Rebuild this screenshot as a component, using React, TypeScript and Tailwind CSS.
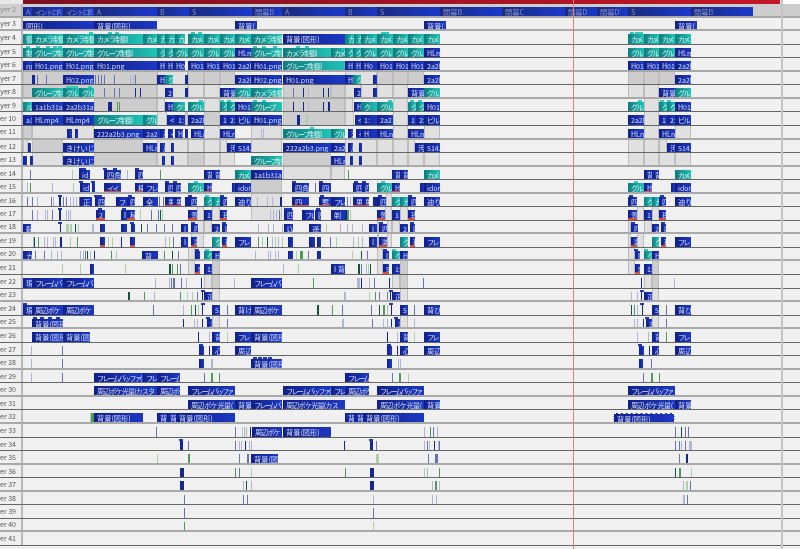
type Clip = [string, number, number, string?];

type Row = {
  n: number;
  bands?: string;
  clips?: Clip[];
  ticks?: string;
  marks?: string;
};

const clipStyles: Record<string, string> = {
  b: "bg-gradient-to-r from-[#11208a] to-[#1c38c4] text-[#d4ddf4]",
  r: "bg-gradient-to-r from-[#11208a] to-[#1c38c4] border-b-2 border-[#d8503c] text-[#d4ddf4]",
  t: "bg-gradient-to-r from-[#0f7c80] to-[#1fc4b6] text-[#d4eeee]",
  h: "bg-gradient-to-r from-[#1a2a7c] to-[#1b38cc] text-[#8490c4]",
  s: "bg-gradient-to-r from-[#11208a] to-[#1c38c4] border border-dashed border-white text-[#d4ddf4]",
};

const tickStyles: Record<string, string> = {
  l: "bg-[#6673b4]",
  L: "bg-[#aeb5d6]",
  b: "bg-[#16268f]",
  g: "bg-[#4f9a58]",
  G: "bg-[#a9d0aa]",
  d: "bg-[#10543c]",
};

const rows: Row[] = [
  { n: 2, clips: [["h",23,32,"A"],["h",32,63,"イントロA"],["h",63,94,"イントロB"],["h",94,157,"A"],["h",157,189,"B"],["h",189,252,"S"],["h",252,282,"閉幕B"],["h",282,345,"A"],["h",345,377,"B"],["h",377,440,"S"],["h",440,502,"閉幕B"],["h",502,565,"閉幕C"],["h",565,597,"閉幕D"],["h",597,628,"閉幕D'"],["h",628,691,"S"],["h",691,753,"閉幕B"]] },
  { n: 3, clips: [["b",23,94,"図形)"],["b",94,157,"背景(図形)"],["b",235,257,"背景("],["b",424,446,"背景("],["b",675,697,"背景("]] },
  { n: 4, marks: "t91 t110 t117 t193 t200 t383 t387 t632 t637 t641",
    clips: [["t",23,32,"御"],["t",32,63,"カメラ制御"],["t",63,94,"カメラ制御"],["t",94,143,"カメラ制御"],["t",143,157,"カメ"],["t",157,165,"カ"],["t",165,175,"カ"],["t",175,185,"カメ"],["t",188,204,"カメ"],["t",204,220,"カメ"],["t",220,235,"カメ"],["t",235,251,"カメ"],["t",251,282,"カメラ制御"],["b",283,345,"背景(図形)"],["t",345,354,"カ"],["t",354,361,"カ"],["t",361,377,"カメ"],["t",377,393,"カメ"],["t",393,408,"カメ"],["t",408,424,"カメ"],["t",424,440,"カメ"],["t",628,644,"カメ"],["t",644,659,"カメ"],["t",659,675,"カメ"],["t",675,691,"カメ"]] },
  { n: 5, marks: "t28 t38 t48 t55 t60 t255 t264 t275 t298 t307",
    clips: [["t",23,32,"制"],["t",32,63,"グループ制"],["t",63,94,"グループ制"],["t",94,157,"グループ制御"],["t",157,165,"グ"],["t",165,173,"ク"],["t",173,188,"グル"],["t",188,204,"グル"],["t",204,220,"グル"],["t",220,235,"グル"],["b",235,251,"HLm"],["t",251,282,"グループ制"],["t",283,331,"カメラ制御"],["t",331,345,"カメ"],["t",345,353,"ク"],["t",353,361,"ク"],["t",361,377,"グル"],["t",377,393,"グル"],["t",393,408,"グル"],["t",408,424,"グル"],["b",424,440,"HLm"],["t",628,644,"グル"],["t",644,659,"グル"],["t",659,675,"グル"],["b",675,691,"HLm"]] },
  { n: 6, clips: [["b",23,32,"ng"],["b",32,63,"H01.png"],["b",63,94,"H01.png"],["b",94,157,"H01.png"],["b",157,165,"H"],["b",165,173,"H"],["b",173,185,"H0"],["b",188,204,"H01"],["b",204,220,"H01"],["b",220,235,"H01"],["b",235,251,"2a2l"],["b",251,282,"H01.png"],["t",283,345,"グループ制御"],["b",345,353,"H"],["b",353,361,"H"],["b",361,377,"H0"],["b",377,393,"H01"],["b",393,408,"H01"],["b",408,424,"H01"],["b",424,440,"2a2l"],["b",628,644,"H01"],["b",644,659,"H01"],["b",659,675,"H01"],["b",675,691,"2a2l"]] },
  { n: 7, bands: "d23-157 e157-188 d188-204 d204-220 d220-235 e345-377 d377-393 d393-408 d408-424 d628-644 d644-659 d659-675",
    ticks: "b32+3 l37 l46 l95 l98 l101 l104 l114 L130 L133 l135 b185+3 L286 L289 L293 l303 L317 L320 L323",
    clips: [["b",63,94,"H02.png"],["b",157,165,"H"],["t",165,173,"ク"],["b",235,251,"2a2l"],["b",251,282,"H02.png"],["b",283,345,"H01.png"],["b",345,353,"H"],["t",353,361,"ク"],["b",373,377],["b",424,440,"2a2l"],["b",675,691,"2a2l"]] },
  { n: 8, bands: "d23-157 e157-188 e188-204 e204-220 d283-331 d331-345 e345-361 e361-377 e377-393 e393-408 e628-644 e644-659",
    marks: "t68 t72 t76 t90",
    ticks: "l104 l114 l119 b135 b140 b185+3 l293 b303 L308 b323 b328",
    clips: [["t",32,63,"グループ制"],["t",63,79,"グル"],["t",79,94,"グル"],["b",165,173,"2"],["b",220,235,"背景"],["t",235,251,"グル"],["t",251,282,"カメラ制御"],["b",354,361,"2"],["b",373,377],["b",408,424,"背景"],["t",424,440,"グル"],["b",659,675,"背景"],["t",675,691,"グル"]] },
  { n: 9, bands: "d94-157 e157-165 e204-220 d283-345 e345-353 e393-408 e644-659",
    marks: "t201 t222 t229 t255 t264 t390 t412 t420 t640 t662 t669",
    ticks: "b108+4 g117 g119 b293 b303 L308 b323 b328+2",
    clips: [["t",23,32,"ル"],["b",32,63,"1a1b31a"],["b",63,94,"2a2b31a"],["b",165,173,"H"],["t",173,185,"ク"],["t",188,204,"グル"],["t",220,227,"ク"],["t",227,235,"ク"],["b",235,251,"H01"],["t",251,282,"グループ"],["b",354,361,"H"],["t",361,377,"ク"],["t",377,393,"グル"],["t",408,416,"ク"],["t",416,424,"ク"],["b",424,440,"H01"],["t",628,644,"グル"],["t",659,667,"ク"],["t",667,675,"ク"],["b",675,691,"H01"]] },
  { n: 10, bands: "e157-167 d185-188 d204-220 d283-345 e345-354 e393-408 e644-659",
    ticks: "b297+3 G306+2",
    clips: [["b",23,32,"a1"],["b",32,63,"HLmp4"],["b",63,94,"HLmp4"],["t",94,143,"グループ制御"],["t",143,157,"グル"],["b",167,175,"<"],["b",175,185,"1:"],["b",188,204,"2a2l"],["b",220,227,"1"],["b",227,235,"2:"],["b",235,251,"ビル"],["b",251,282,"H01.png"],["b",355,361,"<"],["b",361,377,"1:"],["b",377,393,"2a2"],["b",408,416,"1"],["b",416,424,"2:"],["b",424,440,"ビル"],["b",628,644,"2a2l"],["b",659,667,"1"],["b",667,675,"2:"],["b",675,691,"ビル"]] },
  { n: 11, bands: "d23-32 e32-94 e204-220 e251-282 e393-408 e424-440 e644-659 e675-691",
    marks: "t312",
    ticks: "L261 L263",
    clips: [["b",67,72],["b",75,78],["b",94,143,"222a2b3.png"],["b",143,160,"2a2"],["b",160,165,"彦"],["b",168,173,"<"],["b",175,183,"H"],["b",185,188],["b",191,204,"HLn"],["b",220,235,"HLn"],["t",283,331,"グループ制御"],["t",331,345,"グル"],["b",348,353,"芝"],["b",356,361,"<"],["b",361,377,"H"],["b",377,393,"HLn"],["b",408,424,"HLn"],["b",628,644,"HLn"],["b",659,675,"HLn"]] },
  { n: 12, bands: "e23-28 d32-63 d94-143 e157-188 e188-204 e204-220 e220-227 e251-282 e345-377 e377-393 e393-408 e408-415 e628-644 e644-659 e659-667",
    clips: [["b",28,30],["b",63,94,"きけいじゅ"],["b",143,157,"HLm"],["b",160,165,"彦"],["b",171,173],["b",227,235,"汚"],["b",235,251,"514."],["b",283,331,"222a2b3.png"],["b",331,345,"2a2"],["b",348,353,"彦"],["b",359,361],["b",415,424,"汚"],["b",424,440,"514."],["b",667,675,"汚"],["b",675,691,"514."]] },
  { n: 13, bands: "e32-63 d94-157 e157-188 d188-204 e204-220 e220-235 d283-331 e345-377 e377-393 e393-408 e408-424 e424-440 e628-644 e644-659 e659-675 e675-691",
    clips: [["b",23,27],["b",30,32],["b",63,94,"きけいじゅ"],["b",162,165],["b",171,173],["t",251,282,"グループ制"],["b",331,345,"HLr"],["b",350,353],["b",359,361]] },
  { n: 14, bands: "e283-331 e331-345",
    marks: "b81 b84 b105 b137 b115",
    ticks: "l30 G72 L127 g160 g348",
    clips: [["b",79,90,"id"],["b",104,121,"四角"],["b",135,143,"四"],["b",204,212,"背"],["b",212,220,"背"],["t",235,251,"カメ"],["b",251,282,"1a1b31a"],["b",392,400,"背"],["b",400,408,"背"],["t",424,440,"カメ"],["b",644,652,"背"],["b",652,659,"背"],["t",675,691,"カメ"]] },
  { n: 15, bands: "d251-282",
    marks: "b81 b93 b167 b175 t196 b294 b321 b356 b364 t383 t636",
    ticks: "L27 g30 L52 G73 l315",
    clips: [["b",80,90,"id"],["b",92,94],["r",104,121,"イイ"],["r",135,143,"棒"],["b",143,158,"フレ"],["b",165,173,"四"],["b",173,181,"四"],["t",188,204,"グル"],["r",204,212,"H"],["b",232,235],["b",235,251,"idor"],["b",292,309,"四角"],["b",319,331,"四"],["b",353,362,"四"],["b",362,369,"四"],["t",377,392,"グル"],["r",392,400,"H"],["b",420,424],["b",424,440,"idor"],["t",628,644,"グル"],["r",644,652,"H"],["b",671,675],["b",675,691,"idor"]] },
  { n: 16, bands: "e251-282 e386-392",
    marks: "b60 b96 b100 b130 b190 t207 b222 b60 b322 b380 b410 b631 b662",
    ticks: "l27 l32 L37 l51 L53 b59+2 l63 l66 L70 L73 L76 l79 l159 l163 b185+3 L257 L267 L272 b280+2 l347 L350 b373+4",
    clips: [["b",80,92,"正"],["b",95,105,"四"],["b",116,127,"フ"],["b",127,135,"四"],["b",143,158,"全"],["r",165,173,"男"],["r",173,181,"男"],["b",188,197,"四"],["t",204,212,"ク"],["t",212,220,"カ"],["b",220,227,"四"],["b",235,251,"迪り"],["r",292,309,"四"],["r",319,331,"罫"],["b",331,345,"フレ"],["r",353,362,"男"],["r",362,369,"男"],["b",377,386,"四"],["t",392,400,"ク"],["t",400,408,"カ"],["b",408,416,"四"],["b",424,440,"迪り"],["b",628,637,"四"],["t",644,652,"ク"],["t",652,659,"カ"],["b",659,666,"四"],["b",675,691,"迪り"]] },
  { n: 17, bands: "e251-282 e197-204 e212-220 e385-392 e400-408 e637-644 e652-659",
    marks: "b60 b100 b124 b286 b290 b318",
    ticks: "l32 L37 L45 L47 l52 b59+2 L66 L68 L70 G140 l151 l158 d160 G162 L270 L273 L276 l279 b345+2 g347+2 G350",
    clips: [["r",96,105,"2"],["b",121,127,"I"],["r",127,135,"秘"],["r",188,197,"怱"],["b",204,212,"1"],["r",220,227,"珠"],["b",284,293,"四"],["b",302,314,"フレ"],["b",315,321,"四"],["b",331,345,"剃"],["r",377,385,"怱"],["b",392,400,"1"],["r",408,415,"珠"],["r",628,637,"怱"],["b",644,652,"1"],["r",659,666,"珠"]] },
  { n: 18, bands: "e191-204 e204-212 e392-400 e387-392 e377-379 e628-631 e644-652",
    marks: "b60 b132 b193 b224 b381 b412 b633 b663",
    ticks: "b60 G66+3 G70+2 d75 G78 L92+2 d141 l147 l156 l164 l172 L258 L268 L273 L282 G326 L340 L347 L352 L362 ",
    clips: [["b",23,31,"転"],["b",100,105],["b",121,127],["b",131,135],["b",181,188,"I"],["b",191,198,"四"],["b",212,220,"2"],["b",222,227,"四"],["r",284,293,"LV"],["b",309,321,"遥-"],["b",369,377,"I"],["b",379,387,"四"],["b",400,408,"2"],["b",410,415,"四"],["b",631,638,"四"],["b",652,659,"2"],["b",661,666,"四"]] },
  { n: 19, bands: "e191-204 e387-392 e377-379 e628-631 e637-644",
    ticks: "L33 d34 g38 L44 L47 L53 L55 b60+2 G70 g77 G108 G112 b121 L165 G169 l173 g258 G262 d267 L272 G275 L278 G282 l330 G336 L353 G358 L362",
    clips: [["r",100,105],["r",130,135],["b",181,188,"I"],["r",191,197,"装"],["t",212,220,"ク"],["r",222,227,"珠"],["b",235,251,"フレ"],["b",288,293],["b",309,315],["b",317,321],["b",369,377,"I"],["r",379,387,"装"],["t",400,408,"ク"],["r",410,415,"珠"],["b",424,440,"フレ"],["r",631,637,"装"],["t",652,659,"ク"],["r",661,666,"珠"],["b",675,691,"フレ"]] },
  { n: 20, bands: "e188-195 e377-383 e628-635",
    marks: "b197 t207 b385 t394 b636 t646",
    ticks: "l35 l44 L51 L57 L61 L80 L83 l85 d87 L90 b94 g111 G116 g164 d172 l178 L255 L268 L270 L275 L278 G296 g300+3 l308 G352 d361 l367",
    clips: [["b",23,32,"カ形"],["b",142,158,"背"],["b",195,200],["t",204,212,"ク"],["b",212,220,"H"],["r",288,293],["r",317,321],["b",383,389,"I"],["t",392,400,"ク"],["b",400,408,"H"],["b",635,640,"I"],["t",644,652,"ク"],["b",652,659,"H"]] },
  { n: 21, bands: "e188-195 d212-220 e377-383 d400-408 e628-635 d652-659",
    ticks: "G62 G80 G125 d169+2 g172 g177 l180 L283 G298 d358+2 l361 L366 G368 d370",
    clips: [["b",90,94],["r",195,200,"5"],["b",204,212,"1:"],["b",331,345,"I 背"],["r",383,389,"5"],["b",392,400,"1:"],["r",635,640,"5"],["b",644,652,"1:"]] },
  { n: 22, bands: "e204-212 d212-220 e392-400 d400-408 e644-652 d652-659",
    ticks: "L155 L169 l171 l173+2 l181 L186 b201 L234 g313 L357+3 b361 L369 l374 b389 l423 b641 L674",
    clips: [["b",23,32,"現"],["b",32,63,"フレームバ"],["b",63,94,"フレームバ"],["b",251,282,"フレームバ"]] },
  { n: 23, bands: "e212-220 e400-408 e652-659",
    marks: "b203 b391 b642",
    ticks: "d128+2 g144 L154 g180 G187 G192 l197 b202 L344+2 G369 g375 l379 l387 b390 L631 L637 b641",
    clips: [["b",204,212,"正"],["b",392,400,"正"],["b",644,652,"正"]] },
  { n: 24,
    marks: "b25 b203 b391 b642",
    ticks: "l153 L183 g191 d195 G198 b202 l227 d317+2 g332 l342 l371 d379 g383+2 L387 b391 l414 d631 g634 L637 b642 l666",
    clips: [["b",23,32,"現"],["b",32,63,"周辺ボケ"],["b",63,94,"周辺ボケ"],["b",212,220,"5"],["b",235,251,"背け"],["b",251,282,"周辺ボケ"],["b",400,408,"5"],["b",424,440,"背び"],["b",652,659,"5"],["b",675,691,"背び"]] },
  { n: 25, bands: "e212-220 e400-408 e652-659",
    marks: "b35 b42 b50 b58 b208 b396 b647",
    ticks: "b183 L194 L197 b202 l227 L342+2 l372 L383 L387 b391 L414 L634 L637 b643 l666",
    clips: [["b",32,63,"背景(図形"],["b",207,212,"3"],["b",395,400,"3"],["b",646,652,"3"]] },
  { n: 26,
    ticks: "b198 L209 G227 b387 L397 G414 L637 L648 g666",
    clips: [["b",32,63,"背景(図形"],["b",63,90,"背景(図"],["b",212,220,"背"],["b",235,251,"フレ"],["b",251,282,"背景(図形"],["b",400,408,"背"],["b",424,440,"フレ"],["b",652,659,"背"],["b",675,691,"フレ"]] },
  { n: 27,
    marks: "b201 b389 b640",
    ticks: "L31 l62 b209 b397 b649",
    clips: [["b",199,204],["b",212,220,"心"],["b",235,251,"周辺"],["b",387,392],["b",400,408,"心"],["b",424,440,"周辺"],["b",639,644],["b",652,659,"心"],["b",675,691,"周辺"]] },
  { n: 28,
    marks: "b255 b260 b265 b270",
    ticks: "L31 l62 L211 L212 L398 L400 l651",
    clips: [["b",199,204],["b",251,282,"背景(図形"],["b",387,392],["b",639,643]] },
  { n: 29,
    ticks: "L31 l62 l204 g211+2 g219 l392 g399+2 G408 l643 g651+2 g659",
    clips: [["b",94,143,"フレームバッファ("],["b",143,157,"フレ"],["b",157,180,"フレーム"],["b",345,369,"フレーム"]] },
  { n: 30,
    clips: [["b",94,157,"周辺ボケ光量(カスタ"],["b",157,180,"周辺ボケ"],["b",188,235,"フレームバッファ"],["b",283,331,"フレームバッファ("],["b",331,345,"フレ"],["b",345,369,"周辺ボケ"],["b",377,424,"フレームバッファ"],["b",628,675,"フレームバッファ"]] },
  { n: 31,
    clips: [["b",188,235,"周辺ボケ光量("],["b",235,251,"背景"],["b",251,282,"フレームバ"],["b",283,345,"周辺ボケ光量(カス"],["b",377,424,"周辺ボケ光量("],["b",424,440,"背景"],["b",628,675,"周辺ボケ光量("],["b",675,691,"背景"]] },
  { n: 32,
    ticks: "G90 g91+3",
    clips: [["b",94,143,"背景(図形)"],["b",157,167,"背"],["b",167,176,"背"],["b",176,235,"背景(図形)"],["b",345,354,"背"],["b",354,363,"背"],["b",363,424,"背景(図形)"],["s",613,675,"背景(図形)"]] },
  { n: 33,
    ticks: "l156 l235 G242 L244 L246 b250 L424 g430 l433 L437 l675 d681 l685 l688",
    clips: [["b",252,282,"周辺ボケ"],["b",283,331,"背景(図形)"]] },
  { n: 34,
    marks: "b181 b371",
    ticks: "b180+3 l188 l235 L239 L241 b245 L249 L251 b344 b370+3 l376 L424 l427 L429 b434 L438 l439 l675 l679 L681 l685 L689+3",
    clips: [] },
  { n: 35,
    ticks: "G157 g188+2 l239 l247+2 G376+3 l428 l435+3 l679 b686+2",
    clips: [["b",251,278,"背景(図"]] },
  { n: 36,
    ticks: "b180+4 g235 l239 G251 g345 b370+4 G424 L427 g439 d675 g679+2 G691",
    clips: [] },
  { n: 37,
    ticks: "b180+4 L243 d246 L251 b370+4 L432 g435+2 L439 L683 G686+2 l690",
    clips: [] },
  { n: 38, ticks: "l184 l243 l247 L373 L432 L436 L683+2 l687", clips: [] },
  { n: 39, ticks: "l184 l373", clips: [] },
  { n: 40, ticks: "g184 G373", clips: [] },
  { n: 41, clips: [] },
];

// rows whose bottom rule falls between two pixels in the scaled-down capture
const softRules = [2, 3, 6, 8, 11, 13, 15, 18, 20, 23, 25, 28, 30, 32, 35, 37, 40];

function parseBands(text?: string) {
  if (!text) return [];
  return text.split(" ").filter(Boolean).map((token) => {
    const [from, to] = token.slice(1).split("-").map(Number);
    return { dark: token[0] === "d", from, to };
  });
}

function parseTicks(text?: string) {
  if (!text) return [];
  return text.split(" ").filter(Boolean).map((token) => {
    const [x, w] = token.slice(1).split("+").map(Number);
    return { kind: token[0], x, w: w || 1 };
  });
}

// kana are narrower than kanji in the original UI font
function kanaSpacing(label: string) {
  const kana = label.match(/[\u30a0-\u30ff]/g)?.length ?? 0;
  return kana ? `${(-2 * kana) / label.length}px` : undefined;
}

function TimelineRow({ row }: { row: Row }) {
  const soft = softRules.includes(row.n);
  const hidden = row.n === 2;

  return (
    <div
      className={`flex ${hidden ? "h-[14.1px]" : "h-[13.55px]"} ${soft ? "border-b-2 border-[#a9a9a9]" : "border-b border-[#666666]"}`}
    >
      <div
        className={`flex w-[23px] shrink-0 items-center justify-end overflow-hidden whitespace-nowrap border-r-2 pr-[5px] text-[7px] ${hidden ? "border-[#b4b4b4] bg-[#cfcfcf] text-[#8c8c8c]" : "border-[#b8b8b8] bg-[#efefef] text-[#555555]"}`}
      >
        Layer {row.n}
      </div>
      <div className={`relative min-w-0 flex-1 overflow-hidden ${hidden ? "bg-[#cdcdcd]" : "bg-[#f0f0f0]"}`}>
        {parseBands(row.bands).map((band, index) => (
          <div
            key={index}
            className={`absolute inset-y-0 border-x border-[#bcbcbc] ${band.dark ? "bg-[#cdcdcd]" : "bg-[#e0e0e0]"}`}
            style={{ left: band.from - 23, width: band.to - band.from }}
          />
        ))}
        {parseTicks(row.ticks).map((tick, index) => (
          <div
            key={index}
            className={`absolute top-[3px] h-[10px] ${tickStyles[tick.kind]}`}
            style={{ left: tick.x - 23, width: tick.w }}
          />
        ))}
        {(row.clips ?? []).map(([kind, from, to, label], index) => (
          <div
            key={index}
            className={`absolute ${hidden ? "top-[3.5px]" : "top-[3px]"} h-[10px] overflow-hidden whitespace-nowrap pl-[3px] leading-[10px] ${/^[\x00-\x7f]+$/.test(label ?? "") ? "text-[7px]" : "text-[7.2px]"} ${clipStyles[kind]}`}
            style={{ left: from - 23, width: to - from, letterSpacing: kanaSpacing(label ?? "") }}
          >
            {label}
          </div>
        ))}
        {parseTicks(row.marks).map((mark, index) => (
          <div
            key={index}
            className={`absolute top-[1px] h-[2px] w-[4px] ${mark.kind === "t" ? "bg-[#35c8c0]" : "bg-[#2238b0]"}`}
            style={{ left: mark.x - 25 }}
          />
        ))}
      </div>
    </div>
  );
}

export default function App() {
  return (
    <div
      className="relative h-[549px] w-[800px] overflow-hidden bg-[#f0f0f0] blur-[0.4px]"
      style={{ fontFamily: '"Noto Sans CJK JP", "Noto Sans", sans-serif' }}
    >
      <div className="flex h-[3.5px] bg-[#d8d8d8]">
        <div className="w-[23px] bg-[#e8e8e8]" />
        <div className="w-[757px] bg-gradient-to-r from-[#7a1020] to-[#c41626]" />
        <div className="flex-1 bg-white" />
      </div>
      {rows.map((row) => (
        <TimelineRow key={row.n} row={row} />
      ))}
      <div className="absolute inset-y-0 left-[573px] w-px bg-[#e67a72]" />
      <div className="absolute inset-y-0 left-[781px] w-[2px] bg-[#c4c4c4]" />
    </div>
  );
}
